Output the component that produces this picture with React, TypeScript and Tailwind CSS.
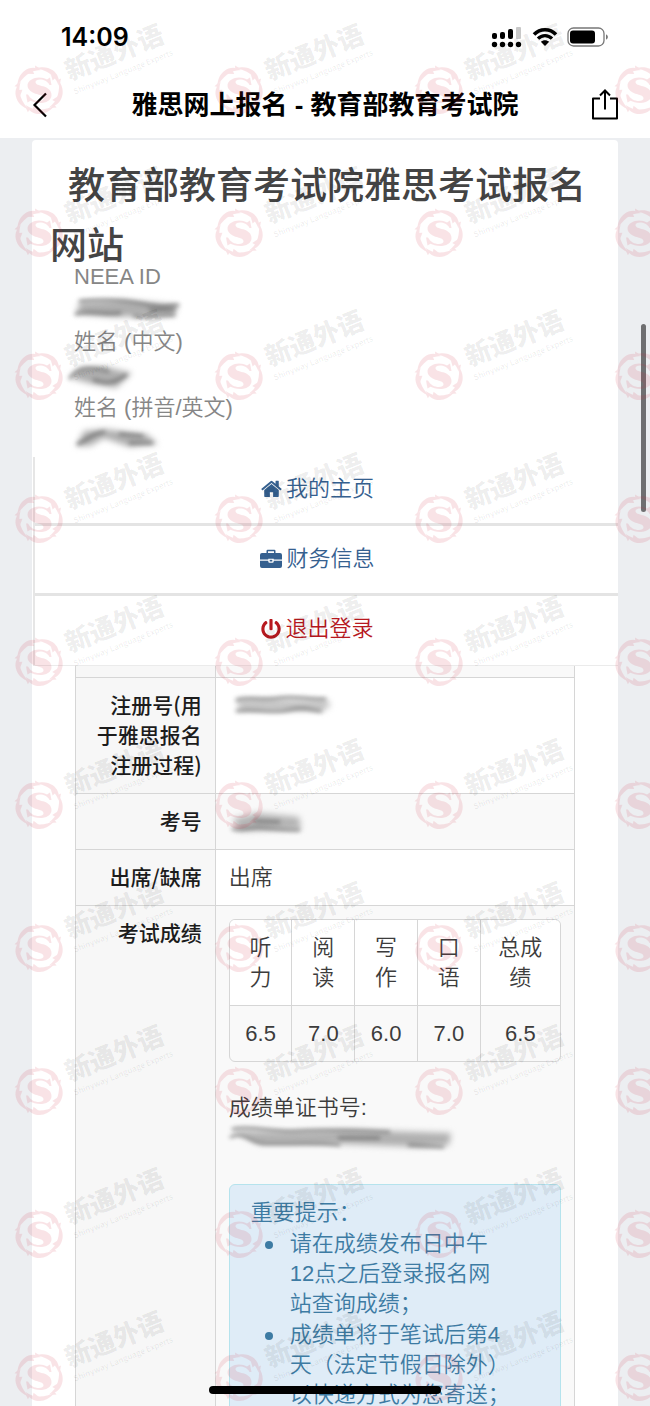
import React from "react";
import { FaPowerOff } from "react-icons/fa";

const sans = "font-['Liberation_Sans','Noto_Sans_CJK_SC',sans-serif]";

function WatermarkLogo() {
  return (
    <svg viewBox="-25 -25 50 50" className="absolute left-[14px] top-[65px] size-[50px]">
      <g fill="#d0253c">
        {[-38, 34, 106, 178, 250].map((angle) => (
          <g key={angle} transform={`rotate(${angle})`}>
            <path d="M-15 -16 C-10 -22 -5 -24 0 -24 C6 -24 11 -21 14 -14.500 C9 -18 5 -19.500 0 -19.500 C-5 -19.500 -10 -18.500 -15 -16 Z" />
            <path d="M0 -20.500 L6 -15.500 L7 -19.500 Z" />
            <path d="M-11 -18.500 L-17 -18 L-14.500 -15 Z" />
          </g>
        ))}
        <path d="M8 -10.500 L11 -12.500 L12.500 -5 L10.500 -5 C8.500 -9 4.500 -10.500 1 -10.500 C-1.500 -10.500 -3.500 -9.500 -3.500 -8 C-3.500 -5.500 0 -4.800 4 -3.700 C9 -2.300 12.500 .5 12.500 5 C12.500 10.500 7 13 1 13 C-3 13 -6 12 -8.500 10.800 L-11.500 12.500 L-13 4.500 L-11 4.500 C-8.500 9 -4.500 11 0 11 C2.500 11 4.500 10 4.500 8.500 C4.500 6 2 5.400 -1.500 4.300 C-7 2.700 -11.500 0 -11.500 -4.500 C-11.500 -9.500 -5.500 -12.500 0 -12.500 C3 -12.500 6 -11.700 8 -10.500 Z" />
      </g>
    </svg>
  );
}

function Watermark() {
  return (
    <div
      aria-hidden="true"
      className="pointer-events-none absolute inset-0 z-20 grid auto-rows-[143px] grid-cols-[repeat(4,200px)] overflow-hidden"
    >
      {Array.from({ length: 40 }, (_, i) => (
        <div key={i} className="relative">
          <div className="opacity-[0.12]">
            <WatermarkLogo />
          </div>
          {i % 4 < 3 && (
            <div className="absolute left-[68px] top-[56px] origin-left -rotate-[22deg] whitespace-nowrap font-['Noto_Sans_CJK_SC',sans-serif] text-black/8">
              <p className="text-[26px] font-black leading-[28px]">新通外语</p>
              <p className="pt-[4px] text-[8px] font-medium leading-[10px]">Shinyway Language Experts</p>
            </div>
          )}
        </div>
      ))}
    </div>
  );
}

type SmudgeProps = { className: string; width: number; body: string; strokes: string[]; tone?: string };

function Smudge({ className, width, body, strokes, tone = "#aeaeae" }: SmudgeProps) {
  return (
    <svg aria-hidden="true" viewBox={`0 0 ${width} 30`} className={`block h-[30px] overflow-visible ${className}`}>
      <path d={body} fill={tone} className="blur-[3px]" />
      {strokes.map((d) => (
        <path key={d} d={d} fill="none" stroke="#555" strokeWidth="3" strokeLinecap="round" className="opacity-60 blur-[2px]" />
      ))}
    </svg>
  );
}

function StatusBar() {
  return (
    <div className="flex h-[72px] items-center justify-between pl-[61px] pr-[41px] pt-[2px]">
      <time className="font-['Inter',sans-serif] text-[25px] font-semibold leading-[30px] text-black">14:09</time>
      <div className="flex items-center gap-[9px]">
        <svg viewBox="0 0 32 22" className="h-[22px] w-[32px]">
          <rect x="1" y="7" width="5" height="6" rx="2" />
          <rect x="9" y="6" width="5" height="7" rx="2" />
          <rect x="17" y="3" width="5" height="10" rx="2" />
          <rect x="25" y="1" width="5" height="12" rx="1" fill="#c8c8c8" />
          {[3.5, 11.5, 19.5, 27.5].map((x) => (
            <circle key={x} cx={x} cy="18.500" r="2.700" />
          ))}
        </svg>
        <svg viewBox="0 0 26 20" className="h-[20px] w-[26px]">
          <path d="M2 7.500 C8 1 18 1 24 7.500" fill="none" stroke="#000" strokeWidth="3.500" />
          <path d="M6 11.700 C10 7.500 16 7.500 20 11.700" fill="none" stroke="#000" strokeWidth="3.300" />
          <path d="M13 19 L8.800 14.800 C11 12.600 15 12.600 17.200 14.800 Z" />
        </svg>
        <svg viewBox="0 0 42 20" className="h-[20px] w-[42px]">
          <rect x="1" y="1" width="36" height="18" rx="5.500" fill="none" stroke="#777" strokeWidth="1.300" />
          <rect x="3" y="3.500" width="25" height="13" rx="3" />
          <path d="M39 7.500 C41.500 8 41.500 12 39 12.500 Z" fill="#777" />
        </svg>
      </div>
    </div>
  );
}

function TitleBar() {
  return (
    <div className="flex h-[66px] items-center justify-between px-[31px]">
      <button type="button" aria-label="返回" className="w-[30px]">
        <svg viewBox="0 0 18 26" className="h-[26px] w-[18px]">
          <path d="M15 1.500 L3.500 13 L15 24.500" fill="none" stroke="#000" strokeWidth="2.200" />
        </svg>
      </button>
      <p className="font-['Liberation_Sans','Noto_Sans_CJK_SC',sans-serif] text-[26px] font-semibold leading-[32px] text-black">
        雅思网上报名 - 教育部教育考试院
      </p>
      <button type="button" aria-label="分享" className="flex w-[30px] justify-end">
        <svg viewBox="0 0 28 32" className="h-[32px] w-[28px]" fill="none" stroke="#000" strokeWidth="2">
          <path d="M9 9.500 H2 V29.500 H26 V9.500 H19" strokeLinejoin="round" />
          <path d="M14 20.500 V2 M9 6.500 L14 1.500 L19 6.500" />
        </svg>
      </button>
    </div>
  );
}

const scores = [
  { label: "听力", value: "6.5" },
  { label: "阅读", value: "7.0" },
  { label: "写作", value: "6.0" },
  { label: "口语", value: "7.0" },
  { label: "总成绩", value: "6.5" },
];

function ScoreTable() {
  return (
    <table className="w-full table-fixed border-separate border-spacing-0 overflow-hidden rounded-md border border-[#d6d6d6] text-center">
      <colgroup>
        <col className="w-[19%]" />
        <col className="w-[19%]" />
        <col className="w-[19%]" />
        <col className="w-[19%]" />
        <col />
      </colgroup>
      <thead>
        <tr className="bg-white">
          {scores.map((s) => (
            <th key={s.label} scope="col" className="border-b border-r border-[#d6d6d6] px-[12px] pb-[12px] pt-[13px] font-[350] last:border-r-0">
              {s.label}
            </th>
          ))}
        </tr>
      </thead>
      <tbody>
        <tr>
          {scores.map((s) => (
            <td key={s.label} className="border-r border-[#d6d6d6] pb-[12px] pt-[13px] last:border-r-0">
              {s.value}
            </td>
          ))}
        </tr>
      </tbody>
    </table>
  );
}

function Notice() {
  return (
    <section className="mt-[31px] rounded-md border border-[#b5e3ed] bg-[#dfecf7] py-[13px] pl-[21px] pr-[21px] text-[#3d7ba3]">
      <p>重要提示：</p>
      <ul className="mt-px space-y-px pl-[39px]">
        <li className="relative whitespace-nowrap before:absolute before:-left-[25px] before:top-[12px] before:size-[8px] before:rounded-full before:bg-[#3d7ba3]">
          请在成绩发布日中午<br />12点之后登录报名网<br />站查询成绩；
        </li>
        <li className="relative whitespace-nowrap before:absolute before:-left-[25px] before:top-[12px] before:size-[8px] before:rounded-full before:bg-[#3d7ba3]">
          成绩单将于笔试后第4<br />天（法定节假日除外）<br />以快递方式为您寄送；
        </li>
      </ul>
    </section>
  );
}

const th = "border border-[#d6d6d6] bg-[#f7f7f7] px-[13px] pb-[14px] pt-[11px] text-right align-top font-['Noto_Sans_CJK_SC',sans-serif] text-[21px] font-medium text-[#1c1c1c]";
const td = "border border-[#d6d6d6] px-[13px] pb-[12px] pt-[13px] align-top";

function ResultTable() {
  return (
    <table className="w-full table-fixed border-collapse text-[22px] leading-[30px] text-[#3c3c3c]">
      <colgroup>
        <col className="w-[28%]" />
        <col />
      </colgroup>
      <tbody>
        <tr className="bg-[#f9f9f9]">
          <td className="h-[11px] border-x border-b border-[#d6d6d6] bg-[#f7f7f7]" />
          <td className="h-[11px] border-x border-b border-[#d6d6d6]" />
        </tr>
        <tr>
          <th scope="row" className={th}>注册号(用<br />于雅思报名<br />注册过程)</th>
          <td className={td}>
            <Smudge
              className="w-[104px]"
              width={104}
              tone="#c4c4c4"
              body="M8 8 L98 9 L102 14 L94 20 L10 20 Z"
              strokes={["M8 9 C18 5 34 10 50 7 S80 9 96 8", "M8 20 C26 17 42 23 60 19 S84 20 92 20"]}
            />
          </td>
        </tr>
        <tr className="bg-[#f9f9f9]">
          <th scope="row" className={th}>考号</th>
          <td className={td}>
            <Smudge
              className="w-[80px]"
              width={80}
              tone="#b4b4b4"
              body="M4 12 L28 6 L70 10 L72 22 L10 24 Z"
              strokes={["M4 22 C12 24 20 20 34 21 S56 23 70 23", "M26 14 L50 15"]}
            />
          </td>
        </tr>
        <tr>
          <th scope="row" className={th}>出席/缺席</th>
          <td className={td}>出席</td>
        </tr>
        <tr className="bg-[#f9f9f9]">
          <th scope="row" className={th}>考试成绩</th>
          <td className={`${td} pb-[40px]`}>
            <ScoreTable />
            <p className="mt-[31px]">成绩单证书号:</p>
            <Smudge
              className="w-[230px]"
              width={230}
              tone="#b0b0b0"
              body="M4 8 L60 9 L120 7 L222 10 L220 22 L190 24 L110 21 L30 21 Z"
              strokes={["M4 6 C24 2 44 10 70 8 S130 8 160 9", "M2 14 C14 8 20 18 32 20 S90 18 110 22", "M110 15 L150 15", "M180 22 L214 24"]}
            />
            <Notice />
          </td>
        </tr>
      </tbody>
    </table>
  );
}

function Profile() {
  const label = "leading-[32px]";
  return (
    <div className="pl-[42px] text-[22px] text-[#868686]">
      <p className={label}>NEEA ID</p>
      <Smudge
        className="mt-[3px] w-[108px]"
        width={108}
        body="M6 6 L50 4 L104 9 L100 20 L40 21 L2 18 Z"
        strokes={["M6 5 C30 3 50 4 70 8 S90 10 104 9", "M2 18 C16 14 30 19 46 17", "M60 20 C74 22 90 18 100 19", "M76 14 L100 13"]}
      />
      <p className={label}>姓名 (中文)</p>
      <Smudge
        className="mt-[4px] w-[60px]"
        width={60}
        body="M-4 16 L6 5 L32 5 L58 11 L42 26 L18 22 Z"
        strokes={["M-4 16 C4 5 16 5 34 9", "M20 18 C30 21 38 23 52 13"]}
      />
      <p className={label}>姓名 (拼音/英文)</p>
      <Smudge
        className="mt-[2px] w-[84px]"
        width={84}
        body="M2 20 L10 5 L30 3 L72 8 L84 18 L56 21 L30 12 L16 20 Z"
        strokes={["M4 18 C12 15 16 8 30 6", "M46 8 L68 10", "M56 17 L78 17"]}
      />
    </div>
  );
}

function HomeIcon() {
  return (
    <svg aria-hidden="true" viewBox="0 200 1664 1400" fill="currentColor" className="h-[18px] w-[21px]">
      <path d="M1408 992v480q0 26-19 45t-45 19h-384v-384h-256v384h-384q-26 0-45-19t-19-45v-480q0-1 .5-3t.5-3l575-474 575 474q1 2 1 6zm223-69l-62 74q-8 9-21 11h-3q-13 0-21-7l-692-577-692 577q-12 8-24 7-13-2-21-11l-62-74q-8-10-7-23.500t11-21.500l719-599q32-26 76-26t76 26l244 204v-195q0-14 9-23t23-9h192q14 0 23 9t9 23v408l219 182q10 8 11 21.500t-7 23.500z" />
    </svg>
  );
}

function BriefcaseIcon() {
  return (
    <svg aria-hidden="true" viewBox="0 0 22 20" fill="currentColor" className="h-[20px] w-[22px]">
      <path d="M6.500 4 V2 Q6.500 .8 7.700 .8 H14.300 Q15.500 .8 15.500 2 V4 H20 Q22 4 22 6 V10.500 H13.700 V9.700 H8.300 V10.500 H0 V6 Q0 4 2 4 Z M8 4 H14 V2.300 H8 Z" fillRule="evenodd" />
      <path d="M0 11.800 H8.300 V12.500 Q8.300 13.700 9.500 13.700 H12.500 Q13.700 13.700 13.700 12.500 V11.800 H22 V17 Q22 19 20 19 H2 Q0 19 0 17 Z" />
      <rect x="9.700" y="10.800" width="2.600" height="1.700" />
    </svg>
  );
}

const link = "flex items-center justify-center gap-[4px] pr-[18px] text-[22px] leading-[30px]";

function Menu() {
  return (
    <nav className="ml-[1px] mt-[1px] border-b border-b-[#ebebeb] border-l-2 border-l-[#e6e6e6]">
      <a href="#home" className={`${link} h-[66px] pb-[3px] text-[#35608f]`}>
        <HomeIcon />
        我的主页
      </a>
      <a href="#finance" className={`${link} h-[70px] border-t-3 border-[#e4e4e4] pb-[2px] text-[#35608f]`}>
        <BriefcaseIcon />
        财务信息
      </a>
      <a href="#logout" className={`${link} h-[72px] border-t-3 border-[#e4e4e4] pb-[3px] text-[#b8191f]`}>
        <FaPowerOff className="size-[20px]" />
        退出登录
      </a>
    </nav>
  );
}

export default function App() {
  return (
    <div className={`relative flex h-screen flex-col overflow-hidden bg-[#eceef1] font-[350] ${sans}`}>
      <header className="bg-white">
        <StatusBar />
        <TitleBar />
      </header>
      <main className="mx-[32px] mt-[2px] flex min-h-0 flex-1 flex-col rounded-t bg-white">
        <h1 className="px-[18px] pt-[13px] indent-[18px] font-['Noto_Sans_CJK_SC',sans-serif] text-[37px] font-medium leading-[60px] text-[#444]">
          教育部教育考试院雅思考试报名网站
        </h1>
        <div className="-mt-[12px]">
          <Profile />
        </div>
        <Menu />
        <div className="min-h-0 flex-1 overflow-y-auto px-[43px] [scrollbar-width:none]">
          <ResultTable />
        </div>
      </main>
      <Watermark />
      <div className="absolute right-[4px] top-[324px] z-10 h-[188px] w-[5px] rounded-full bg-[#6f6f71]" />
      <div className="absolute bottom-[12px] left-1/2 z-30 h-[8px] w-[232px] -translate-x-1/2 rounded-full bg-black" />
    </div>
  );
}
